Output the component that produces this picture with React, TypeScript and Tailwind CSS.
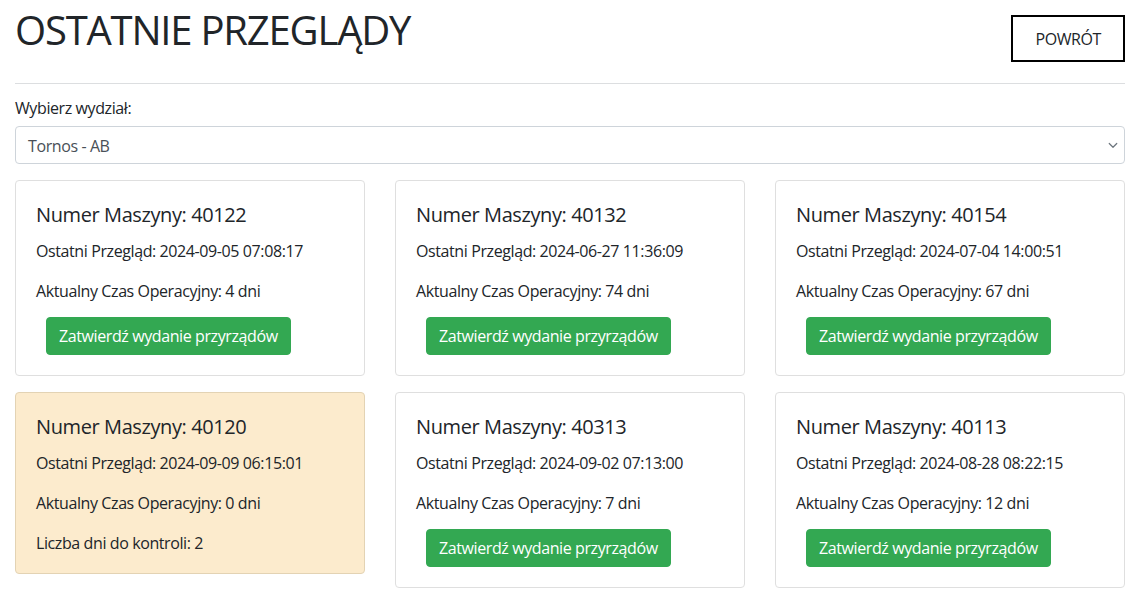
import React from 'react';

type Machine = {
  id: number;
  lastReview: string;
  days: number;
  daysToCheck?: number;
};

const machines: Machine[] = [
  { id: 40122, lastReview: '2024-09-05 07:08:17', days: 4 },
  { id: 40132, lastReview: '2024-06-27 11:36:09', days: 74 },
  { id: 40154, lastReview: '2024-07-04 14:00:51', days: 67 },
  { id: 40120, lastReview: '2024-09-09 06:15:01', days: 0, daysToCheck: 2 },
  { id: 40313, lastReview: '2024-09-02 07:13:00', days: 7 },
  { id: 40113, lastReview: '2024-08-28 08:22:15', days: 12 },
];

const MachineCard: React.FC<{ machine: Machine }> = ({ machine }) => {
  const warning = machine.daysToCheck !== undefined;

  return (
    <div
      className={`rounded-[4px] border px-5 pt-[22px] ${
        warning ? 'bg-[#fcebcd] border-[#e3d3b4] pb-[18px]' : 'bg-white border-[#dfdfdf] pb-5'
      }`}
    >
      <h5 className="mb-3 text-[20px] leading-[1.2] font-normal">Numer Maszyny: {machine.id}</h5>
      <p className="mb-4 leading-6">Ostatni Przegląd: {machine.lastReview}</p>
      <p className={`leading-6 ${warning ? 'mb-4' : 'mb-[14px]'}`}>
        Aktualny Czas Operacyjny: {machine.days} dni
      </p>
      {warning ? (
        <p className="leading-6">Liczba dni do kontroli: {machine.daysToCheck}</p>
      ) : (
        <button className="ml-[10px] rounded-[4px] border border-[#33a852] bg-[#33a852] px-3 py-1.5 text-base leading-6 tracking-tight text-white">
          Zatwierdź wydanie przyrządów
        </button>
      )}
    </div>
  );
};

export default function App() {
  return (
    <div
      className="min-h-screen bg-white text-base tracking-tight text-[#212529]"
      style={{ fontFamily: '"Segoe UI", "Open Sans", "Noto Sans", sans-serif' }}
    >
      <div className="ml-[15px] w-[1110px]">
        <div className="flex items-start justify-between">
          <h1 className="mt-[6px] text-[40px] leading-[1.2] font-normal tracking-[-0.03em]">OSTATNIE PRZEGLĄDY</h1>
          <button className="mt-[15px] border-2 border-black bg-white px-[22px] py-[9.5px] text-base leading-6 tracking-tight text-[#212529]">
            POWRÓT
          </button>
        </div>

        <hr className="mt-[21px] border-t border-[#dcdee0]" />

        <label className="mt-[12px] mb-[6px] block leading-6">Wybierz wydział:</label>
        <div className="mb-4 flex h-[38px] items-center justify-between rounded-[4px] border border-[#ced4da] bg-white pr-[3px] pl-3 text-[#495057]">
          <span className="pt-[2px] leading-6">Tornos - AB</span>
          <svg width="16" height="12" viewBox="0 0 16 16" fill="none">
            <path d="m3 6 5 5 5-5" stroke="#6c757d" strokeWidth="1.6" strokeLinecap="round" strokeLinejoin="round" />
          </svg>
        </div>

        <div className="grid grid-cols-3 items-start gap-x-[30px] gap-y-4">
          {machines.map((m) => (
            <MachineCard key={m.id} machine={m} />
          ))}
        </div>
      </div>
    </div>
  );
}
